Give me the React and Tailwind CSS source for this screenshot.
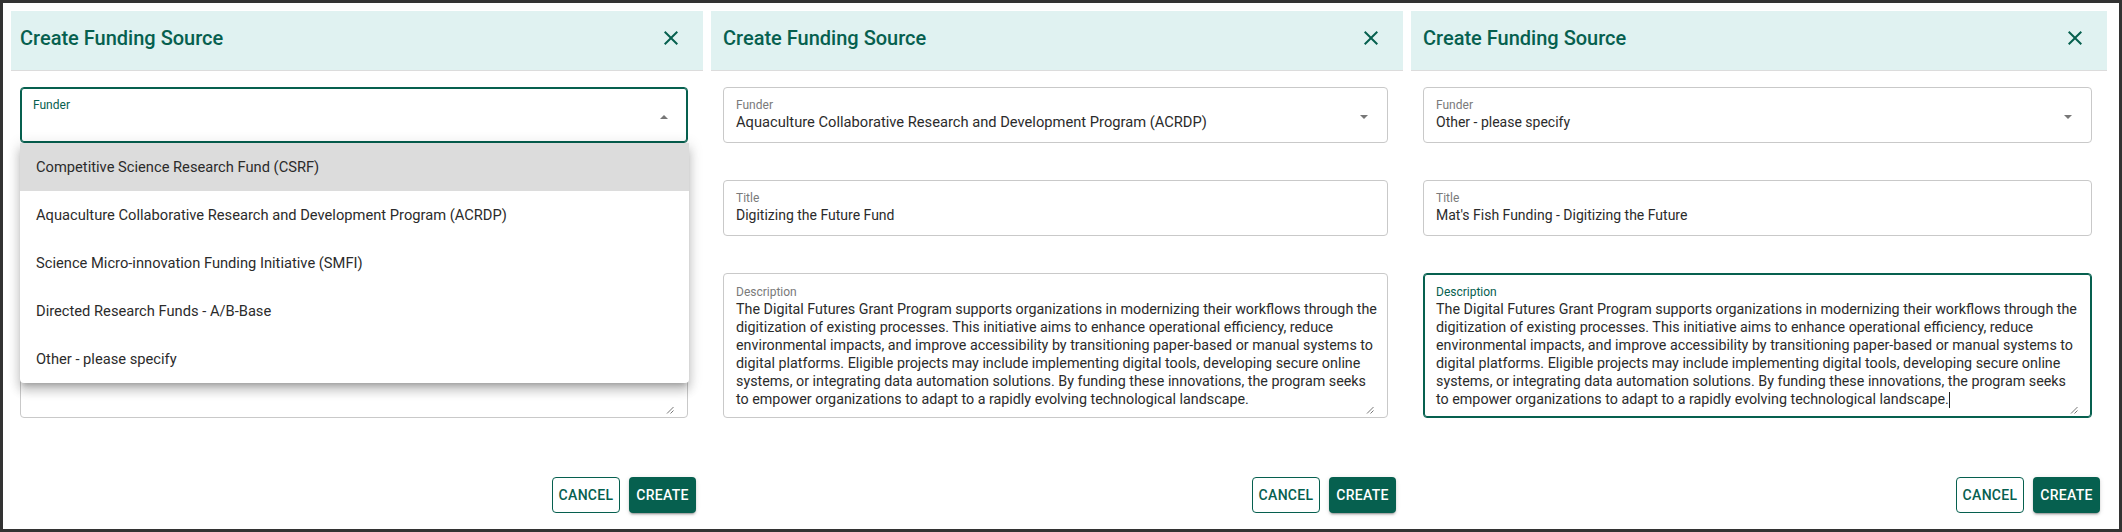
import React from 'react';

const GREEN = '#06604f';

const funders = [
  'Competitive Science Research Fund (CSRF)',
  'Aquaculture Collaborative Research and Development Program (ACRDP)',
  'Science Micro-innovation Funding Initiative (SMFI)',
  'Directed Research Funds - A/B-Base',
  'Other - please specify',
];

const descLines = [
  'The Digital Futures Grant Program supports organizations in modernizing their workflows through the',
  'digitization of existing processes. This initiative aims to enhance operational efficiency, reduce',
  'environmental impacts, and improve accessibility by transitioning paper-based or manual systems to',
  'digital platforms. Eligible projects may include implementing digital tools, developing secure online',
  'systems, or integrating data automation solutions. By funding these innovations, the program seeks',
  'to empower organizations to adapt to a rapidly evolving technological landscape.',
];

const CloseIcon = () => (
  <svg width="24" height="24" viewBox="0 0 24 24" fill={GREEN}>
    <path d="M19 6.41 17.59 5 12 10.59 6.41 5 5 6.41 10.59 12 5 17.59 6.41 19 12 13.41 17.59 19 19 17.59 13.41 12z" />
  </svg>
);

const Arrow = ({ up }) => (
  <svg width="24" height="24" viewBox="0 0 24 24" fill="#777">
    {up ? <path d="M8 14l4-4 4 4z" /> : <path d="M8 10l4 4 4-4z" />}
  </svg>
);

const Grip = () => (
  <svg width="8" height="8" viewBox="0 0 8 8" stroke="#666" strokeWidth="0.9">
    <line x1="1" y1="7.5" x2="7.5" y2="1" />
    <line x1="4.5" y1="7.5" x2="7.5" y2="4.5" />
  </svg>
);

// outlined input with the label sitting inside the box
const Field = ({ label, value, focused, arrow, wide }) => (
  <div
    className={`relative h-[56px] rounded border bg-white pl-3 pr-10 pt-[9px] ${
      focused ? 'border-[#06604f] ring-1 ring-inset ring-[#06604f]' : 'border-[#c9c9c9]'
    }`}
  >
    <div className={`text-[12px] leading-4 ${focused ? 'text-[#06604f]' : 'text-[#7a7a7a]'}`}>{label}</div>
    <div className={`${wide ? 'text-[14.7px]' : 'text-[14px]'} leading-[18px] text-[#2b2b2b] whitespace-nowrap`}>
      {value}
    </div>
    {arrow && (
      <div className="absolute right-[11px] top-[17px]">
        <Arrow up={arrow === 'up'} />
      </div>
    )}
  </div>
);

const Description = ({ lines, focused, caret }) => (
  <div
    className={`relative h-[145px] rounded border bg-white pl-3 pr-4 pt-[10px] ${
      focused ? 'border-[#06604f] ring-1 ring-inset ring-[#06604f]' : 'border-[#c9c9c9]'
    }`}
  >
    <div className={`text-[12px] leading-4 ${focused ? 'text-[#06604f]' : 'text-[#7a7a7a]'}`}>Description</div>
    <div className="text-[14.3px] leading-[18px] text-[#2b2b2b]">
      {lines.map((l, i) => (
        <div key={i} className="whitespace-nowrap">
          {l}
          {caret && i === lines.length - 1 && (
            <span className="inline-block w-px h-[16px] bg-[#222] align-middle" />
          )}
        </div>
      ))}
    </div>
    <div className="absolute right-[13px] bottom-[3px]">
      <Grip />
    </div>
  </div>
);

const Panel = ({ funder, title, lines, open, focusDesc, inset, wideFunder }) => (
  <div className="flex flex-col bg-white">
    <div
      className={`h-[60px] shrink-0 flex items-center justify-between bg-[#e0f2f1] border-b border-[#dcdcdc] ${
        inset ? 'pl-[9px]' : 'pl-3'
      } pr-5 pb-[6px]`}
    >
      <h2 className="text-[20px] leading-8 font-medium text-[#06604f]">Create Funding Source</h2>
      <CloseIcon />
    </div>

    <div className={`${inset ? 'ml-[9px]' : 'ml-3'} mr-[15px]`}>
      <div className="relative mt-[16px]">
        <Field label="Funder" value={funder} focused={open} arrow={open ? 'up' : 'down'} wide={wideFunder} />
        {open && (
          <ul className="absolute left-0 right-[-1px] top-full z-10 bg-white rounded-b shadow-[0_5px_5px_-3px_rgba(0,0,0,0.2),0_8px_10px_1px_rgba(0,0,0,0.14),0_3px_14px_2px_rgba(0,0,0,0.12)]">
            {funders.map((f, i) => (
              <li
                key={f}
                className={`h-12 flex items-center px-4 text-[14.7px] text-[#2b2b2b] ${i === 0 ? 'bg-[#dcdcdc]' : ''}`}
              >
                {f}
              </li>
            ))}
          </ul>
        )}
      </div>

      <div className="mt-[37px]">
        <Field label="Title" value={title} />
      </div>

      <div className="mt-[37px]">
        <Description lines={lines} focused={focusDesc} caret={focusDesc} />
      </div>
    </div>

    <div className="mt-[59px] flex justify-end gap-[9px] pr-[7px]">
      <button className="w-[68px] h-9 rounded border border-[#06604f] bg-white text-[14px] font-medium tracking-[0.3px] text-[#06604f]">
        CANCEL
      </button>
      <button className="w-[67px] h-9 rounded bg-[#06604f] text-[14px] font-medium tracking-[0.3px] text-white shadow-[0_3px_1px_-2px_rgba(0,0,0,0.2),0_2px_2px_0_rgba(0,0,0,0.14),0_1px_5px_0_rgba(0,0,0,0.12)]">
        CREATE
      </button>
    </div>
  </div>
);

export default function App() {
  return (
    <div
      className="w-[2122px] h-[532px] border-[3px] border-[#333] bg-white pt-2 pl-2 overflow-hidden"
      style={{ fontFamily: 'Roboto, "Liberation Sans", sans-serif' }}
    >
      <div className="grid grid-cols-[692px_692px_696px] gap-2">
        <Panel funder="" title="" lines={[]} open inset />
        <Panel
          funder="Aquaculture Collaborative Research and Development Program (ACRDP)"
          title="Digitizing the Future Fund"
          lines={descLines}
          wideFunder
        />
        <Panel
          funder="Other - please specify"
          title="Mat's Fish Funding - Digitizing the Future"
          lines={descLines}
          focusDesc
        />
      </div>
    </div>
  );
}
